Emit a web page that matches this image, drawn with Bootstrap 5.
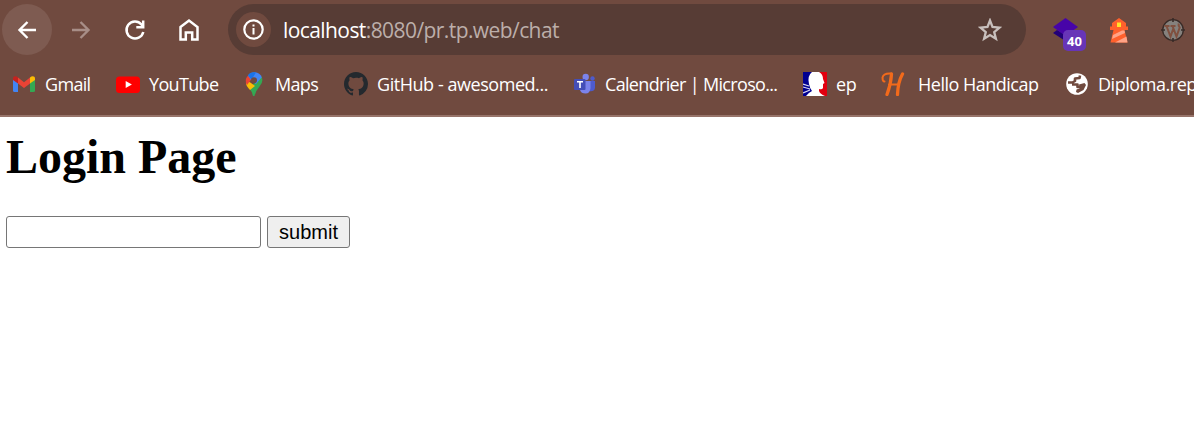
<!DOCTYPE html>
<html lang="en">
<head>
<meta charset="utf-8">
<meta name="viewport" content="width=device-width, initial-scale=1">
<title>Login Page</title>
<link href="https://cdn.jsdelivr.net/npm/bootstrap@5.3.0/dist/css/bootstrap.min.css" rel="stylesheet">
<style>
  body { background: #fff; overflow: hidden; }
  .browser { height: 117px; background: #704a3f; border-bottom: 2px solid #97746a; font-family: "Open Sans", sans-serif; color: #fff; padding-top: 4px; }
  .toolbar { height: 51px; padding-left: 2px; }
  .tool { width: 50px; height: 51px; flex: none; margin-right: 4px; color: #fff; }
  .tool.active-tool { background: #7e5b51; }
  .address { width: 798px; height: 51px; flex: none; background: #573c35; margin-left: 10px; padding-left: 8px; padding-right: 24px; }
  .info { width: 35px; height: 35px; background: #704a3f; margin-right: 12px; }
  .url { font-size: 21px; letter-spacing: -.58px; color: #bcaeaa; line-height: 30px; }
  .url b { font-weight: 400; color: #fff; }
  .ext { position: relative; width: 34px; height: 34px; flex: none; }
  .ext svg { display: block; }
  .count { position: absolute; left: 10px; top: 17px; width: 23px; height: 21px; border-radius: 5px; background: #6735b7; font: 700 13px/22px "Open Sans", sans-serif; text-align: center; }
  .bookmarks { display: grid; grid-template-columns: 104px 126px 102px 228px 231px 78px 184px 130px; padding-left: 12px; height: 58px; align-items: center; }
  .mark-item { gap: 9px; white-space: nowrap; font-size: 18px; line-height: 26px; letter-spacing: -.45px; color: #fff; text-decoration: none; }
  .mark-item:hover { color: #fff; }
  .mark-item svg { flex: none; width: 24px; height: 24px; }
  .tight { letter-spacing: -.67px; }
  .mark-wide { gap: 13px; letter-spacing: -.5px; }
  .page { padding: 13px 6px; }
  .page h1 { font: 700 48px/54px "Liberation Serif", serif; color: #000; margin: 0 0 32px; }
  .login-form { gap: 6px; }
  .field { width: 255px; height: 32px; border: 1px solid #767676; border-radius: 3px; background: #fff; padding: 2px 4px; }
  .send { width: 83px; height: 32px; border: 1px solid #767676; border-radius: 3px; background: #efefef; font: 20px/28px "Liberation Sans", sans-serif; color: #000; padding: 0; }
</style>
</head>
<body>
<header class="browser">
  <nav class="toolbar d-flex align-items-center">
    <a class="tool active-tool rounded-circle d-flex align-items-center justify-content-center" aria-label="Back">
      <svg width="20" height="20" viewBox="0 0 20 20" fill="none" stroke="#fff" stroke-width="2.4"><path d="M19 10H2.5M10.5 2l-8 8 8 8"/></svg></a>
    <a class="tool d-flex align-items-center justify-content-center" aria-label="Forward">
      <svg width="20" height="20" viewBox="0 0 20 20" fill="none" stroke="#a88e87" stroke-width="2.4"><path d="M1 10h16.5M9.500 2l8 8-8 8"/></svg></a>
    <a class="tool d-flex align-items-center justify-content-center" aria-label="Reload">
      <svg width="22" height="22" viewBox="0 0 22 22" fill="none" stroke="#fff" stroke-width="2.5"><path d="M19.300 13A8.500 8.500 0 1 1 17.500 5.500L18.500 7M12.300 8.300h6.900V1.500"/></svg></a>
    <a class="tool d-flex align-items-center justify-content-center" aria-label="Home">
      <svg width="22" height="24" viewBox="0 0 22 24" fill="none" stroke="#fff" stroke-width="2.5"><path d="M2.500 9L11 2.500 19.500 9v12.500h-5.300v-7H7.800v7H2.500z"/></svg></a>
    <div class="address rounded-pill d-flex align-items-center">
      <span class="info rounded-circle d-flex align-items-center justify-content-center">
        <svg width="21" height="21" viewBox="0 0 21 21"><circle cx="10.500" cy="10.500" r="9.200" fill="none" stroke="#fff" stroke-width="2.200"/><path fill="#fff" d="M9.500 5.400h2v2.100h-2zM9.500 9h2v6.500h-2z"/></svg></span>
      <span class="url"><b>localhost</b>:8080/pr.tp.web/chat</span>
      <svg class="ms-auto" width="24" height="24" viewBox="0 0 24 24" fill="none" stroke="#c8bfbc" stroke-width="2.300"><path d="M12 2.500l2.500 6.500 7 .6-5.300 4.500 1.700 6.700-5.900-3.700-5.900 3.700 1.700-6.700L2.500 9.600l7-.6z"/></svg>
    </div>
    <div class="ext" style="margin-left:27px">
      <svg width="34" height="34" viewBox="0 0 34 34"><path fill="#210078" d="M0 20l4-3 10 6v6z"/><path fill="#4704a8" d="M0 14L12.500 5 25 14l-12.500 9z"/></svg>
      <span class="count">40</span>
    </div>
    <div class="ext" style="margin-left:15px">
      <svg width="34" height="34" viewBox="0 0 34 34"><path fill="#ff602c" d="M17 5l7 5v7H10v-7zM8 13.500h18v3.500H8zM11.500 17h11l3 12.500h-17z"/><path fill="#ffa386" d="M11 22l9-4.500h2.500l.5 2.500-13 6zM13 29.500l11.500-6 1 6z"/><path fill="#ffe12b" d="M15 9.500h4v4.500h-4z"/></svg>
    </div>
    <div class="ext" style="margin-left:20px">
      <svg width="34" height="34" viewBox="0 0 34 34"><circle cx="17" cy="17" r="10.300" fill="#85817d" stroke="#392b27" stroke-width="1.300"/><path d="M17 5v4M17 25v4M5 17h4M25 17h4" stroke="#392b27" stroke-width="1.600"/><path d="M8.500 13h5M14.500 13h5M10.500 13l4 10.500 3-8.500M16.500 13l4 10.500 3.200-9q-1.500-2-1-4" fill="none" stroke="#80503f" stroke-width="2"/></svg>
    </div>
  </nav>
  <nav class="bookmarks">
    <a class="mark-item tight d-flex align-items-center" href="#"><svg viewBox="0 0 24 24"><path fill="#4285f4" d="M1 7l5 4v9H2.500Q1 20 1 18.500z"/><path fill="#34a853" d="M23 7l-5 4v9h3.500q1.500 0 1.500-1.500z"/><path fill="#ea4335" d="M6 5.500l6 4.800 6-4.800v6l-6 4.500-6-4.500z"/><path fill="#c5221f" d="M1 6.500C1 4 4 3.500 6 5.500v6L1 8z"/><path fill="#fbbc04" d="M23 6.500c0-2.500-3-3-5-1v6L23 8z"/></svg><span>Gmail</span></a>
    <a class="mark-item tight d-flex align-items-center" href="#"><svg viewBox="0 0 24 24"><rect y="4.500" width="24" height="16.500" rx="3.500" fill="#f00"/><path fill="#fff" d="M9.700 9l6.200 3.500-6.200 3.500z"/></svg><span>YouTube</span></a>
    <a class="mark-item tight d-flex align-items-center" href="#"><svg viewBox="0 0 24 24"><path fill="#34a853" d="M19.500 4.500Q22 10 17.500 14.500 13.500 19 12.500 24H11Q10.500 20 7 16z"/><path fill="#fbbc04" d="M5 8.500l4 2.500 4 3-5 4q-4-4-4-7z"/><path fill="#ea4335" d="M6 3.500L9.500 7 5 13Q2 8 6 3.500z"/><path fill="#4285f4" d="M6 3.500Q9 0 13 .2q5 .3 6.800 5L14 12 9 8z"/><path fill="#1a73e8" d="M6 3.500Q8-.5 14 .4L9.500 7.500z"/><circle cx="12" cy="8.200" r="3" fill="#704a3f"/></svg><span>Maps</span></a>
    <a class="mark-item d-flex align-items-center" href="#"><svg viewBox="0 0 16 16"><path fill="#24292e" d="M8 0C3.580 0 0 3.580 0 8c0 3.540 2.290 6.530 5.470 7.590.4.070.55-.17.55-.38 0-.19-.01-.82-.01-1.490-2.010.37-2.530-.49-2.690-.94-.09-.23-.48-.94-.82-1.130-.28-.15-.68-.52-.01-.53.63-.01 1.080.58 1.230.82.72 1.210 1.870.87 2.330.66.070-.52.28-.87.51-1.070-1.780-.2-3.640-.89-3.640-3.950 0-.87.31-1.590.82-2.150-.08-.2-.36-1.020.08-2.120 0 0 .67-.21 2.200.82A7.600 7.600 0 0 1 8 3.860c.68 0 1.360.09 2 .27 1.530-1.040 2.200-.82 2.200-.82.44 1.100.16 1.920.08 2.120.51.56.82 1.270.82 2.150 0 3.070-1.870 3.750-3.650 3.950.29.25.54.73.54 1.480 0 1.070-.01 1.930-.01 2.200 0 .21.15.46.55.38A8 8 0 0 0 16 8c0-4.420-3.580-8-8-8z"/></svg><span>GitHub - awesomed...</span></a>
    <a class="mark-item tight d-flex align-items-center" href="#"><svg viewBox="0 0 24 24"><circle cx="20.500" cy="6.500" r="2.200" fill="#4e5bcc"/><circle cx="13.700" cy="5" r="3.200" fill="#7b83eb"/><path fill="#4e5bcc" d="M17 9h6v7q-1 4-6 3z"/><path fill="#7b83eb" d="M9 9h9.500v7q-.5 5.500-5 5.500T8 18z"/><rect x="2" y="7" width="11.500" height="11" rx="1" fill="#444eb7"/><path d="M5 9.800h6M8 9.800V16" stroke="#fff" stroke-width="1.600"/></svg><span>Calendrier | Microso...</span></a>
    <a class="mark-item d-flex align-items-center" href="#"><svg viewBox="0 0 24 24"><path fill="#000091" d="M0 0h12v24H0z"/><path fill="#e1000f" d="M12 0h12v24H12z"/><path fill="#fff" d="M9 0h7q4 2 4 7l1.500 4-1.500 1v4q-1 2-4 1v2q1 3 6 5H3q2-3 6-5-2-2-3-7Q4 4 9 0z"/><path d="M0 12l6 2M0 15l7 2M0 21l7-3" stroke="#d7d7f1" stroke-width="1.200"/></svg><span>ep</span></a>
    <a class="mark-item mark-wide d-flex align-items-center" href="#"><svg viewBox="0 0 24 24" fill="none" stroke="#f26a1b" stroke-linecap="round"><path stroke-width="3.300" d="M10.500 2Q10 12 6 22.500M21.500 2Q17 10 16.500 22.500"/><path stroke-width="2" d="M10 1.500Q2.500 1 1.500 5.500q0 4 2 4M8 12.500h10"/></svg><span>Hello Handicap</span></a>
    <a class="mark-item d-flex align-items-center" href="#"><svg viewBox="0 0 24 24"><circle cx="12" cy="12" r="10.800" fill="#fff"/><path fill="none" stroke="#704a3f" stroke-width="2.600" stroke-linejoin="round" d="M15 3.500L14.500 6 10 6.500V9L7.500 10.500H3M7 12.500h5.500V15H15"/><path fill="#704a3f" d="M14 12.500l5.500-1.500 1.500 2-2.500 5-5.500 3-2-1 .5-2.500 3-1z"/></svg><span>Diploma.rep</span></a>
  </nav>
</header>
<main class="page">
  <h1>Login Page</h1>
  <form class="login-form d-flex">
    <input class="field" type="text" aria-label="Login">
    <button class="send" type="button">submit</button>
  </form>
</main>
<script src="https://cdn.jsdelivr.net/npm/bootstrap@5.3.0/dist/js/bootstrap.bundle.min.js"></script>
</body>
</html>
